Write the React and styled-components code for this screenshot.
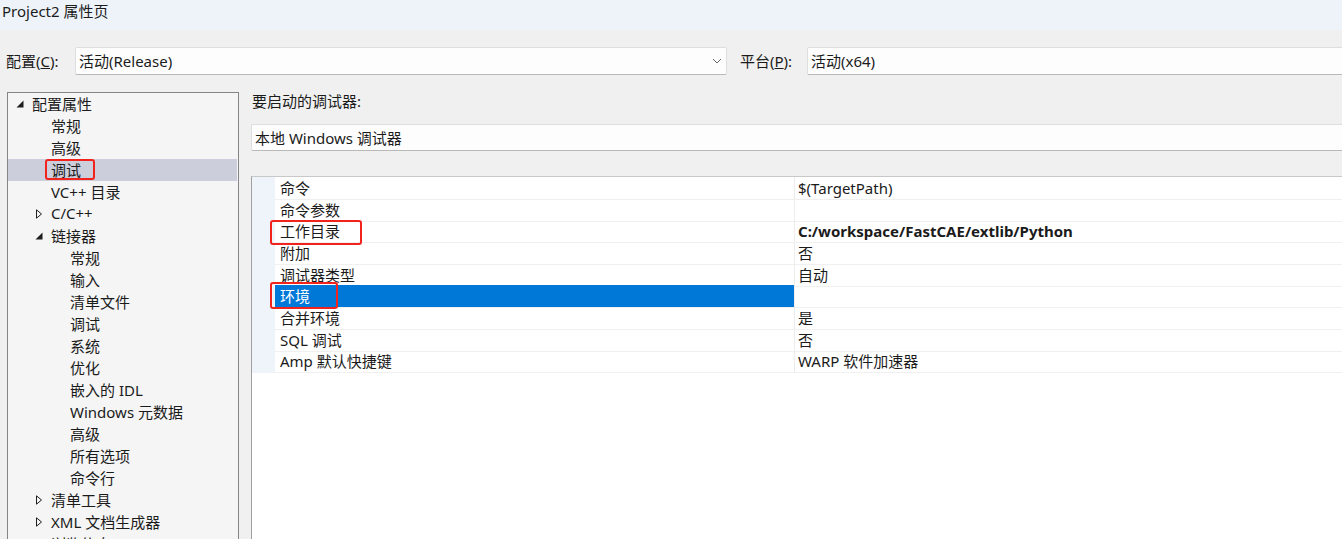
import styled, { createGlobalStyle } from "styled-components";

const GlobalStyle = createGlobalStyle`
  html, body {
    margin: 0;
    padding: 0;
    background: #f0f0f0;
  }
  body {
    font-family: "Noto Sans", "Noto Sans CJK SC", sans-serif;
    font-size: 15px;
    color: #1b1b1b;
  }
`;

const Window = styled.div`
  width: 1342px;
  height: 539px;
  overflow: hidden;
  display: flex;
  flex-direction: column;
  background: #f0f0f0;
`;

const TitleBar = styled.div`
  height: 30px;
  flex: none;
  background: #eef3fa;
  padding-left: 2px;
  line-height: 22px;
  white-space: nowrap;
`;

const ConfigRow = styled.div`
  flex: none;
  margin-top: 17px;
  height: 28px;
  display: flex;
  align-items: center;
  padding-left: 6px;
  white-space: nowrap;
`;

const FieldLabel = styled.label`
  width: ${({ $w }) => $w}px;
  flex: none;
  line-height: 26px;
`;

const Combo = styled.div`
  flex: none;
  box-sizing: border-box;
  width: ${({ $w }) => $w}px;
  height: ${({ $h }) => $h || 28}px;
  display: flex;
  align-items: center;
  justify-content: space-between;
  padding: 0 4px 1px 3px;
  background: #fdfdfd;
  border: 1px solid #dedede;
  border-bottom-color: #b9b9b9;
  border-radius: 2px;
`;

const Chevron = () => (
  <svg width="10" height="6" viewBox="0 0 10 6">
    <path d="M1 1l4 4 4-4" fill="none" stroke="#666" strokeWidth="1" />
  </svg>
);

const Body = styled.div`
  flex: 1;
  margin-top: 17px;
  display: flex;
  min-height: 0;
`;

const Tree = styled.ul`
  list-style: none;
  margin: 0 0 0 7px;
  padding: 0;
  width: 232px;
  box-sizing: border-box;
  border: 1px solid #858585;
  border-bottom: none;
  background: #f5f5f5;
  overflow: hidden;
  flex: none;
`;

const TreeRow = styled.li`
  box-sizing: border-box;
  height: 22px;
  display: flex;
  align-items: center;
  padding-left: ${({ $level }) => 8 + $level * 19}px;
  padding-bottom: 2px;
  margin-right: 1px;
  background: ${({ $selected }) => ($selected ? "#cccedb" : "transparent")};
  white-space: nowrap;
`;

const Twisty = styled.span`
  width: 16px;
  flex: none;
  display: flex;
  align-items: center;
  padding-top: 2px;
`;

const Marked = styled.span`
  position: relative;
`;

const RedBox = styled.span`
  position: absolute;
  left: ${({ $l }) => $l}px;
  top: ${({ $t }) => $t}px;
  width: ${({ $w }) => $w}px;
  height: ${({ $h }) => $h}px;
  box-sizing: border-box;
  border: 2px solid #f2231d;
  border-radius: 3px;
  pointer-events: none;
`;

const Expanded = () => (
  <svg width="8" height="8" viewBox="0 0 8 8">
    <path d="M7.5 0.5V7.5H0.5Z" fill="#1e1e1e" />
  </svg>
);

const Collapsed = () => (
  <svg width="8" height="10" viewBox="0 0 8 10">
    <path d="M1.5 0.8L6.5 5L1.5 9.2Z" fill="none" stroke="#1e1e1e" strokeWidth="1" />
  </svg>
);

const RightPane = styled.div`
  flex: 1;
  min-width: 0;
  display: flex;
  flex-direction: column;
  padding-left: 12px;
`;

const PaneLabel = styled.div`
  line-height: 19px;
  padding-left: 1px;
`;

const DebuggerBox = styled(Combo)`
  width: auto;
  margin-top: 13px;
  margin-right: -4px;
  border-right: none;
  height: 27px;
`;

const Grid = styled.div`
  flex: 1;
  margin-top: 25px;
  margin-right: -4px;
  background: #fff;
  border-top: 1px solid #c8c8c8;
  border-left: 1px solid #a0a0a0;
`;

const PropRow = styled.div`
  display: grid;
  grid-template-columns: 23px 519px 1fr;
  height: 21.67px;
`;

const Gutter = styled.div`
  background: #eff3fa;
`;

const Cell = styled.div`
  position: relative;
  box-sizing: border-box;
  border-bottom: 1px solid #f0f0f0;
  border-left: ${({ $value }) => ($value ? "1px solid #ececec" : "none")};
  padding-left: ${({ $value }) => ($value ? 3 : 5)}px;
  padding-top: 1px;
  line-height: 21px;
  white-space: nowrap;
  font-weight: ${({ $bold }) => ($bold ? 700 : 400)};
  background: ${({ $selected }) => ($selected ? "#0078d7" : "transparent")};
  color: ${({ $selected }) => ($selected ? "#fff" : "#1b1b1b")};
`;

const tree = [
  { level: 0, open: true, label: "配置属性" },
  { level: 1, label: "常规" },
  { level: 1, label: "高级" },
  { level: 1, label: "调试", selected: true, mark: true },
  { level: 1, label: "VC++ 目录" },
  { level: 1, open: false, label: "C/C++" },
  { level: 1, open: true, label: "链接器" },
  { level: 2, label: "常规" },
  { level: 2, label: "输入" },
  { level: 2, label: "清单文件" },
  { level: 2, label: "调试" },
  { level: 2, label: "系统" },
  { level: 2, label: "优化" },
  { level: 2, label: "嵌入的 IDL" },
  { level: 2, label: "Windows 元数据" },
  { level: 2, label: "高级" },
  { level: 2, label: "所有选项" },
  { level: 2, label: "命令行" },
  { level: 1, open: false, label: "清单工具" },
  { level: 1, open: false, label: "XML 文档生成器" },
  { level: 1, open: false, label: "浏览信息" },
  { level: 1, open: false, label: "生成事件" },
];

const props = [
  { name: "命令", value: "$(TargetPath)" },
  { name: "命令参数", value: "" },
  { name: "工作目录", value: "C:/workspace/FastCAE/extlib/Python", bold: true, mark: { l: -5, t: 0, w: 92, h: 25 } },
  { name: "附加", value: "否" },
  { name: "调试器类型", value: "自动" },
  { name: "环境", value: "", selected: true, mark: { l: -5, t: -3, w: 68, h: 27 } },
  { name: "合并环境", value: "是" },
  { name: "SQL 调试", value: "否" },
  { name: "Amp 默认快捷键", value: "WARP 软件加速器" },
];

export default function App() {
  return (
    <Window>
      <GlobalStyle />
      <TitleBar>Project2 属性页</TitleBar>
      <ConfigRow>
        <FieldLabel $w={69}>
          配置(<u>C</u>):
        </FieldLabel>
        <Combo $w={652}>
          <span>活动(Release)</span>
          <Chevron />
        </Combo>
        <FieldLabel $w={67} style={{ marginLeft: 13 }}>
          平台(<u>P</u>):
        </FieldLabel>
        <Combo $w={560}>
          <span>活动(x64)</span>
        </Combo>
      </ConfigRow>
      <Body>
        <Tree>
          {tree.map((item, i) => (
            <TreeRow key={i} $level={item.level} $selected={item.selected}>
              <Twisty>
                {item.open === true && <Expanded />}
                {item.open === false && <Collapsed />}
              </Twisty>
              {item.mark ? (
                <Marked>
                  {item.label}
                  <RedBox $l={-6} $t={0} $w={50} $h={21} />
                </Marked>
              ) : (
                item.label
              )}
            </TreeRow>
          ))}
        </Tree>
        <RightPane>
          <PaneLabel>要启动的调试器:</PaneLabel>
          <DebuggerBox>
            <span>本地 Windows 调试器</span>
          </DebuggerBox>
          <Grid>
            {props.map((p, i) => (
              <PropRow key={i}>
                <Gutter />
                <Cell $selected={p.selected}>
                  {p.name}
                  {p.mark && (
                    <RedBox $l={p.mark.l} $t={p.mark.t} $w={p.mark.w} $h={p.mark.h} />
                  )}
                </Cell>
                <Cell $value $bold={p.bold}>
                  {p.value}
                </Cell>
              </PropRow>
            ))}
          </Grid>
        </RightPane>
      </Body>
    </Window>
  );
}
